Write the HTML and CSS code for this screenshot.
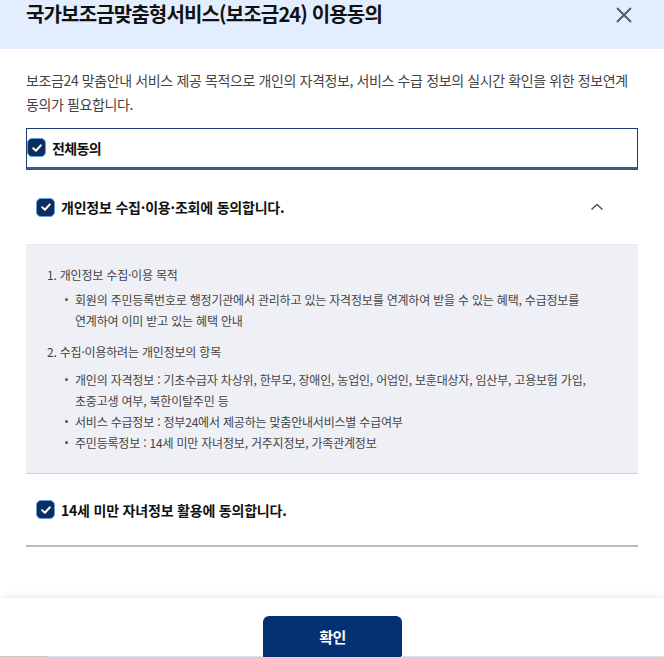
FILE: index.html
```html
<!DOCTYPE html>
<html lang="ko">
<head>
<meta charset="utf-8">
<title>국가보조금맞춤형서비스 이용동의</title>
<link rel="stylesheet" href="styles.css">
</head>
<body>
<div class="modal">
  <header class="modal-head">
    <h1 class="modal-title">국가보조금맞춤형서비스(보조금24) 이용동의</h1>
    <button class="close-btn" aria-label="닫기">
      <svg width="18" height="18" viewBox="0 0 18 18"><path d="M2 2 L16 16 M16 2 L2 16" stroke="#555" stroke-width="1.8" fill="none"/></svg>
    </button>
  </header>

  <div class="modal-body">
    <p class="desc">보조금24 맞춤안내 서비스 제공 목적으로 개인의 자격정보, 서비스 수급 정보의 실시간 확인을 위한 정보연계 동의가 필요합니다.</p>

    <div class="all-agree">
      <span class="chk"><svg width="12" height="12" viewBox="0 0 12 12"><path d="M2.2 6.2 L4.9 8.7 L9.8 3.4" stroke="#fff" stroke-width="2" fill="none" stroke-linecap="round" stroke-linejoin="round"/></svg></span>
      <span class="all-label">전체동의</span>
    </div>

    <section class="agree-item">
      <div class="agree-head">
        <span class="chk"><svg width="12" height="12" viewBox="0 0 12 12"><path d="M2.2 6.2 L4.9 8.7 L9.8 3.4" stroke="#fff" stroke-width="2" fill="none" stroke-linecap="round" stroke-linejoin="round"/></svg></span>
        <span class="agree-label">개인정보 수집·이용·조회에 동의합니다.</span>
        <svg class="chevron" width="14" height="10" viewBox="0 0 14 10"><path d="M1.5 7.5 L7 2.5 L12.5 7.5" stroke="#555" stroke-width="1.6" fill="none"/></svg>
      </div>
      <div class="agree-detail">
        <p class="detail-title">1. 개인정보 수집·이용 목적</p>
        <ul class="detail-list">
          <li>회원의 주민등록번호로 행정기관에서 관리하고 있는 자격정보를 연계하여 받을 수 있는 혜택, 수급정보를 연계하여 이미 받고 있는 혜택 안내</li>
        </ul>
        <p class="detail-title second">2. 수집·이용하려는 개인정보의 항목</p>
        <ul class="detail-list">
          <li>개인의 자격정보 : 기초수급자 차상위, 한부모, 장애인, 농업인, 어업인, 보훈대상자, 임산부, 고용보험 가입, 초중고생 여부, 북한이탈주민 등</li>
          <li>서비스 수급정보 : 정부24에서 제공하는 맞춤안내서비스별 수급여부</li>
          <li>주민등록정보 : 14세 미만 자녀정보, 거주지정보, 가족관계정보</li>
        </ul>
      </div>
    </section>

    <section class="agree-item last">
      <div class="agree-head">
        <span class="chk"><svg width="12" height="12" viewBox="0 0 12 12"><path d="M2.2 6.2 L4.9 8.7 L9.8 3.4" stroke="#fff" stroke-width="2" fill="none" stroke-linecap="round" stroke-linejoin="round"/></svg></span>
        <span class="agree-label">14세 미만 자녀정보 활용에 동의합니다.</span>
      </div>
    </section>
  </div>

  <footer class="modal-foot">
    <button class="confirm-btn">확인</button>
  </footer>
  <div class="page-strip">
    <span class="s1"></span><span class="s2"></span><span class="s3"></span><span class="s4"></span><span class="s5"></span>
  </div>
</div>
</body>
</html>
```

FILE: styles.css
```css
* { box-sizing: border-box; margin: 0; padding: 0; }

html, body {
  width: 664px;
  height: 657px;
  overflow: hidden;
  background: #fff;
}

body {
  font-family: "Noto Sans CJK KR", "Noto Sans", sans-serif;
  color: #222;
  word-break: keep-all;
}

.modal {
  width: 664px;
  height: 657px;
  display: flex;
  flex-direction: column;
  position: relative;
}

.modal-head {
  height: 49px;
  background: #e2edfd;
  display: flex;
  align-items: flex-start;
  justify-content: space-between;
  padding: 0 26px;
}

.modal-title {
  font-size: 20px;
  font-weight: 700;
  line-height: 28px;
  letter-spacing: -0.85px;
  color: #111;
}

.close-btn {
  border: 0;
  background: transparent;
  margin-top: 6px;
  margin-right: 5px;
  width: 18px;
  height: 18px;
  display: flex;
}

.modal-body {
  flex: 1;
  padding: 19px 26px 0;
}

.desc {
  font-size: 14px;
  line-height: 24px;
  letter-spacing: -0.38px;
  color: #444;
}

.chk {
  width: 19px;
  height: 19px;
  border-radius: 5px;
  background: #0f2d5b;
  border: 1.5px solid #5c9cf2;
  display: inline-flex;
  align-items: center;
  justify-content: center;
  flex: none;
}

.all-agree {
  margin-top: 12px;
  height: 42px;
  border: 1px solid #1b3a78;
  border-bottom: 3px solid #3a5890;
  display: flex;
  align-items: center;
  gap: 6px;
  padding-bottom: 1px;
}

.all-label {
  font-size: 14px;
  font-weight: 700;
  letter-spacing: -0.6px;
  color: #111;
}

.agree-head {
  height: 74px;
  display: flex;
  align-items: center;
  gap: 6px;
  padding: 0 34px 0 10px;
}

.agree-label {
  font-size: 14px;
  font-weight: 700;
  letter-spacing: -0.2px;
  color: #111;
  flex: 1;
}

.agree-detail {
  background: #eff0f5;
  border-top: 1px solid #e6e8ee;
  border-bottom: 1px solid #c9d2e4;
  padding: 19px 21px 20px;
  font-size: 12px;
  line-height: 21px;
  letter-spacing: -0.2px;
  color: #444;
}

.detail-title.second { margin-top: 10px; }

.detail-list {
  list-style: none;
  margin-top: 4px;
  padding-left: 28px;
}

.detail-title.second + .detail-list { margin-top: 7px; }

.detail-list li {
  position: relative;
}

.detail-list li::before {
  content: "";
  position: absolute;
  left: -10px;
  top: 9px;
  width: 3px;
  height: 3px;
  border-radius: 50%;
  background: #555;
}

.agree-item.last .agree-head { height: 71px; }
.agree-item.last { border-bottom: 2px solid #bcbcbc; }

.modal-foot {
  height: 59px;
  flex: none;
  background: #fff;
  box-shadow: 0 -3px 6px rgba(0, 0, 0, 0.06);
  display: flex;
  justify-content: center;
  align-items: flex-start;
  padding-top: 18px;
}

.confirm-btn {
  width: 139px;
  height: 46px;
  border: 0;
  border-radius: 6px;
  background: #043174;
  color: #fff;
  font-family: "Noto Sans CJK KR", sans-serif;
  font-size: 15px;
  font-weight: 700;
  letter-spacing: -0.5px;
  padding-bottom: 6px;
  margin-left: 1px;
}

.page-strip {
  position: absolute;
  left: 0;
  bottom: 0;
  width: 664px;
  height: 1px;
  display: flex;
}
.page-strip span { height: 1px; }
.page-strip .s1 { width: 48px; background: #c8c8c8; }
.page-strip .s2 { width: 214px; background: #cfe6f2; }
.page-strip .s3 { width: 139px; background: transparent; }
.page-strip .s4 { width: 43px; background: #cfe6f2; }
.page-strip .s5 { flex: 1; background: #cfe6f2; }
```
